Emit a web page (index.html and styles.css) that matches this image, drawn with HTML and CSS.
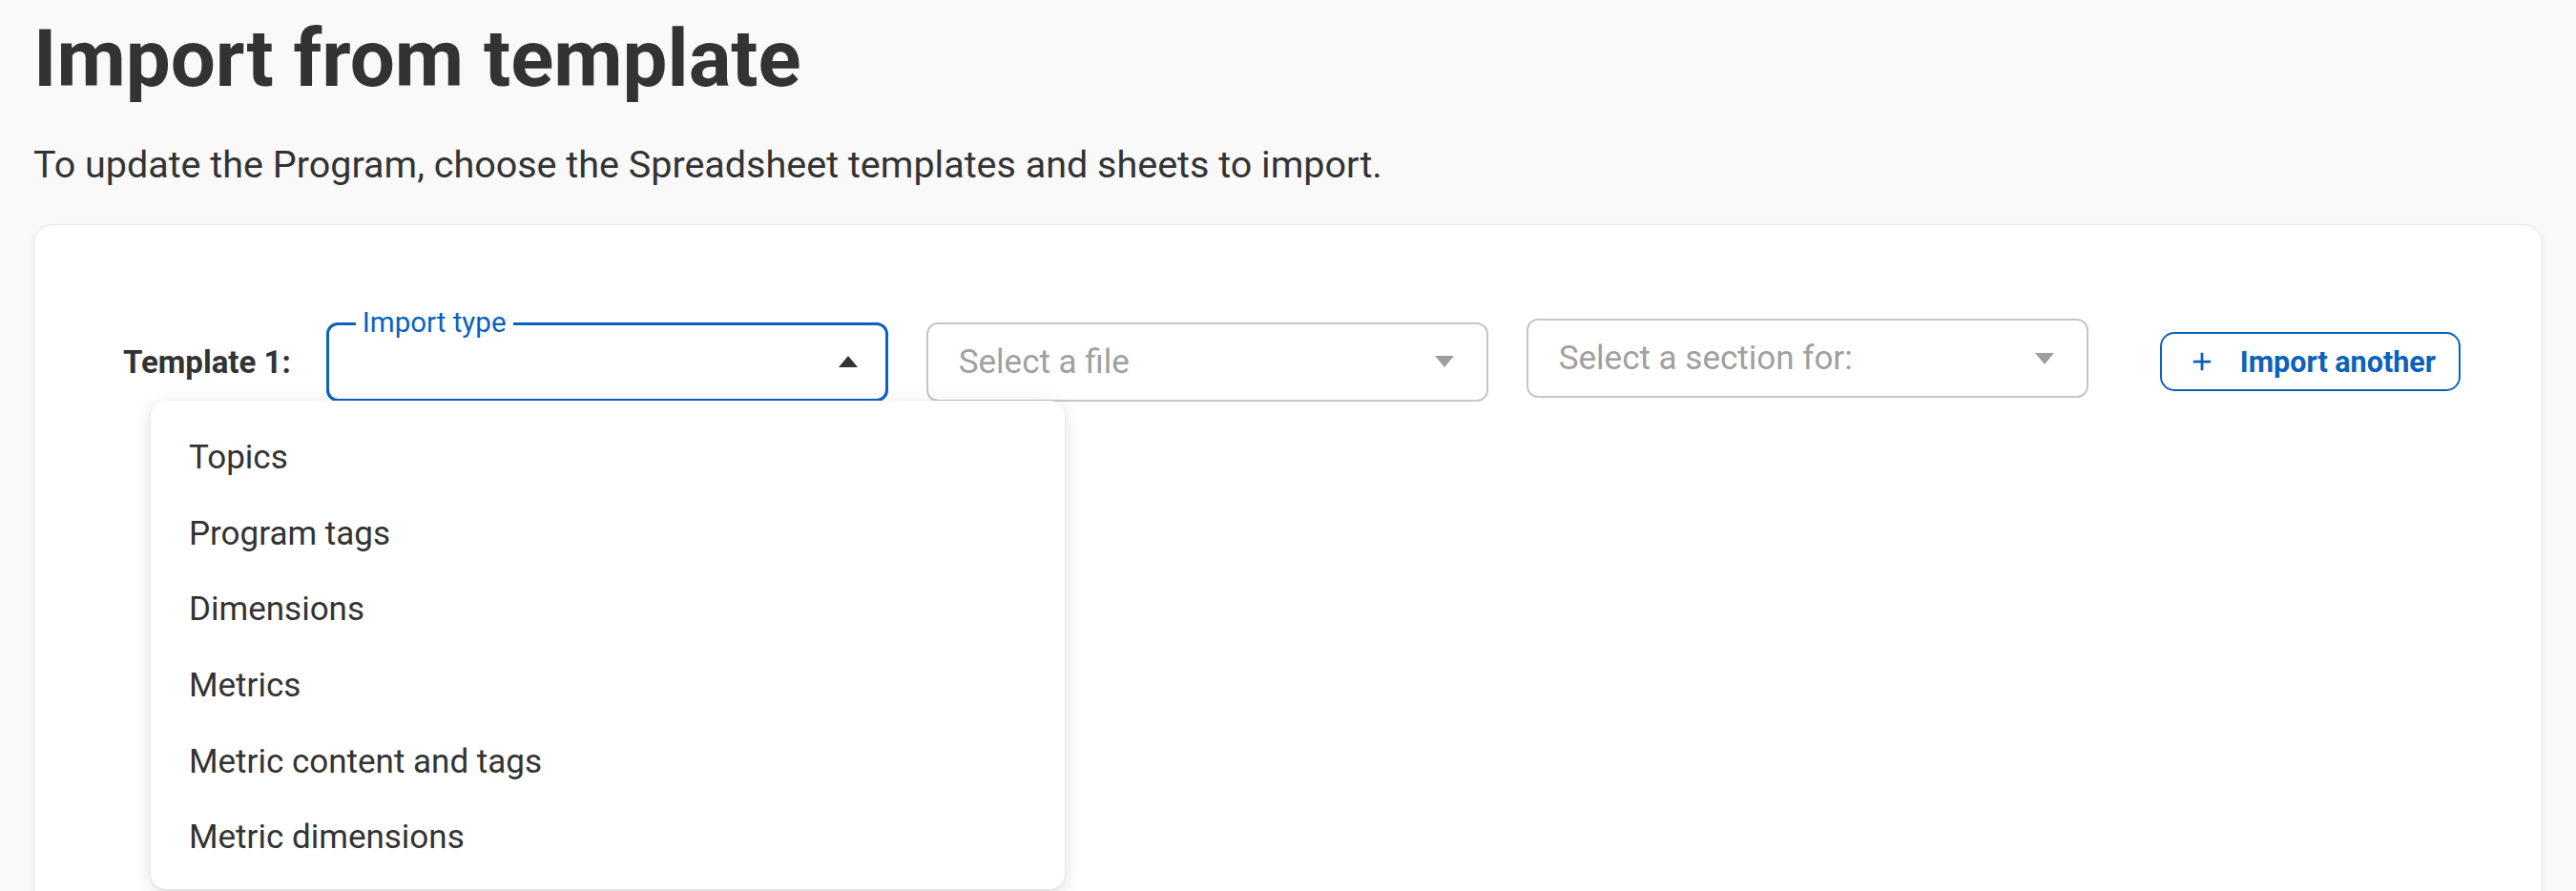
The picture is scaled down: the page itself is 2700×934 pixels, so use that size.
FILE: index.html
```html
<!DOCTYPE html>
<html lang="en">
<head>
<meta charset="utf-8">
<title>Import from template</title>
<link rel="stylesheet" href="styles.css">
</head>
<body>
<main class="page">
  <h1 class="title">Import from template</h1>
  <p class="subtitle">To update the Program, choose the Spreadsheet templates and sheets to import.</p>
  <section class="card">
    <div class="template-row">
      <span class="row-label">Template 1:</span>
      <div class="field field--active">
        <span class="field-label">Import type</span>
        <span class="field-value"></span>
        <span class="caret caret--up"></span>
      </div>
      <div class="field">
        <span class="field-value placeholder">Select a file</span>
        <span class="caret caret--down"></span>
      </div>
      <div class="field field--raised">
        <span class="field-value placeholder">Select a section for:</span>
        <span class="caret caret--down"></span>
      </div>
      <button class="btn-outline" type="button">
        <svg class="btn-icon" viewBox="0 0 24 24" width="24" height="24" aria-hidden="true">
          <path d="M12 2v20M2 12h20" fill="none" stroke="currentColor" stroke-width="3"/>
        </svg>
        <span>Import another</span>
      </button>
      <ul class="menu">
        <li class="menu-item">Topics</li>
        <li class="menu-item">Program tags</li>
        <li class="menu-item">Dimensions</li>
        <li class="menu-item">Metrics</li>
        <li class="menu-item">Metric content and tags</li>
        <li class="menu-item">Metric dimensions</li>
      </ul>
    </div>
  </section>
</main>
</body>
</html>
```
FILE: styles.css
```css
* { box-sizing: border-box; }
html, body { margin: 0; padding: 0; }
body {
  background: #f9f9fa;
  color: #333333;
  font-family: Roboto, "Liberation Sans", Arial, sans-serif;
  overflow: hidden;
}
.page {
  padding: 14px 35px 0 35px;
}
.title {
  margin: 0;
  font-size: 83.5px;
  line-height: 96px;
  font-weight: 700;
  color: #333333;
  padding-left: 0;
}
.subtitle {
  margin: 41px 0 0 0;
  font-size: 39.5px;
  line-height: 44px;
  color: #333333;
}
.card {
  margin-top: 40px;
  background: #ffffff;
  border: 1px solid #e6e8ec;
  border-radius: 20px;
  box-shadow: 0 2px 6px rgba(30, 40, 60, 0.06);
  min-height: 800px;
  padding: 98px 0 0 93px;
}
.template-row {
  position: relative;
  display: flex;
  align-items: center;
}
.row-label {
  font-size: 33px;
  font-weight: 700;
  color: #333333;
  margin-right: 37px;
}
.field {
  position: relative;
  width: 589px;
  height: 83px;
  border: 2px solid #c6c6c6;
  border-radius: 12px;
  display: flex;
  align-items: center;
  justify-content: space-between;
  padding: 0 34px 0 32px;
  margin-right: 40px;
  background: #fff;
}
.field--active {
  border: 3px solid #0a62bb;
  padding-right: 29px;
}
.field--raised {
  margin-bottom: 7px;
  margin-right: 75px;
}
.field-label {
  position: absolute;
  top: -20px;
  left: 28px;
  padding: 0 7px;
  background: #fff;
  color: #0a62bb;
  font-size: 29.5px;
  line-height: 34px;
}
.field-value {
  font-size: 35px;
}
.placeholder {
  color: #a0a0a0;
}
.caret {
  width: 0;
  height: 0;
  border-left: 10px solid transparent;
  border-right: 10px solid transparent;
}
.caret--up {
  border-bottom: 12px solid #333333;
}
.caret--down {
  border-top: 12px solid #9e9e9e;
}
.btn-outline {
  display: flex;
  align-items: center;
  gap: 29px;
  height: 62px;
  padding: 0 24px 0 31px;
  border: 2px solid #0a62bb;
  border-radius: 15px;
  background: #fff;
  color: #0a62bb;
  font-family: inherit;
  font-size: 30.5px;
  font-weight: 700;
  cursor: pointer;
}
.btn-icon {
  width: 22px;
  height: 22px;
}
.menu {
  position: absolute;
  top: 86px;
  left: 29px;
  width: 958px;
  margin: 0;
  padding: 20px 0 14px 0;
  list-style: none;
  background: #fff;
  border-radius: 16px;
  box-shadow: 0 4px 18px rgba(40, 50, 80, 0.16), 0 1px 3px rgba(40, 50, 80, 0.08);
}
.menu-item {
  height: 79.6px;
  display: flex;
  align-items: center;
  padding-left: 40px;
  font-size: 35px;
  color: #333333;
}
```
